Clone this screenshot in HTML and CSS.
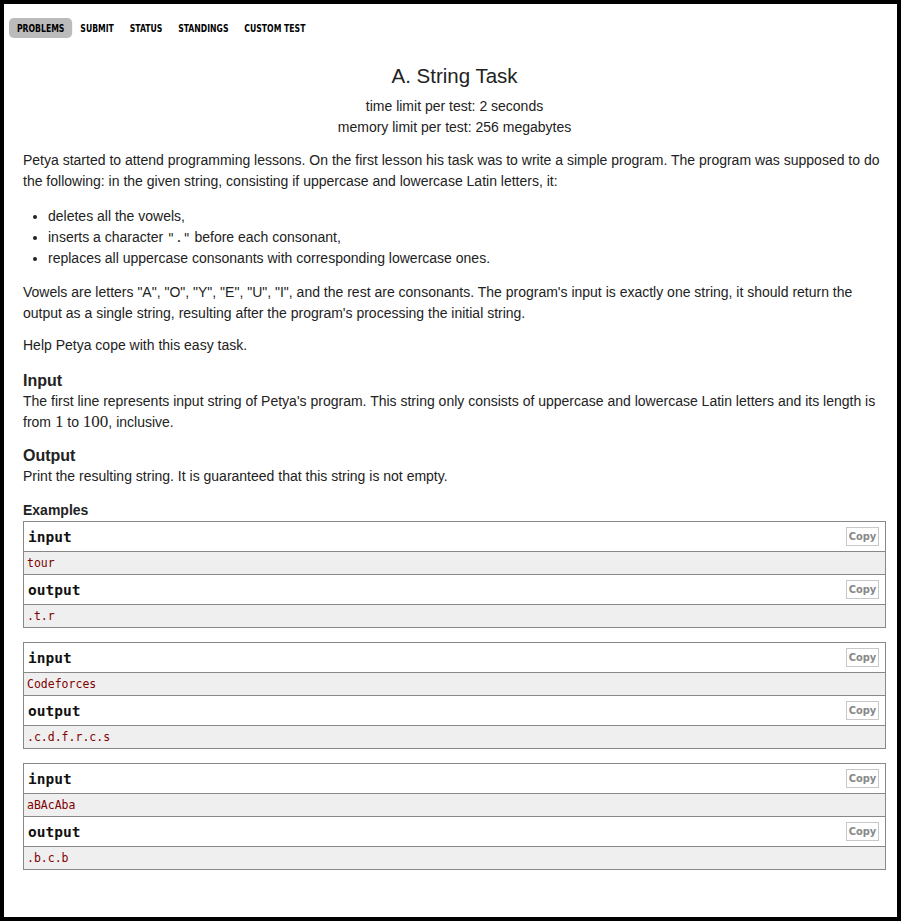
FILE: index.html
```html
<!DOCTYPE html>
<html>
<head>
<meta charset="utf-8">
<link rel="stylesheet" href="styles.css">
</head>
<body>
<nav class="menu">
  <a class="menu-item active">PROBLEMS</a>
  <a class="menu-item">SUBMIT</a>
  <a class="menu-item">STATUS</a>
  <a class="menu-item">STANDINGS</a>
  <a class="menu-item">CUSTOM TEST</a>
</nav>
<div class="problem">
  <div class="header">
    <div class="title">A. String Task</div>
    <div class="limit">time limit per test: 2 seconds</div>
    <div class="limit">memory limit per test: 256 megabytes</div>
  </div>
  <p>Petya started to attend programming lessons. On the first lesson his task was to write a simple program. The program was supposed to do the following: in the given string, consisting if uppercase and lowercase Latin letters, it:</p>
  <ul>
    <li>deletes all the vowels,</li>
    <li>inserts a character <code class="tt">"."</code> before each consonant,</li>
    <li>replaces all uppercase consonants with corresponding lowercase ones.</li>
  </ul>
  <p class="tight">Vowels are letters "A", "O", "Y", "E", "U", "I", and the rest are consonants. The program's input is exactly one string, it should return the output as a single string, resulting after the program's processing the initial string.</p>
  <p class="last">Help Petya cope with this easy task.</p>
  <h3 class="section-title first">Input</h3>
  <p class="section-text">The first line represents input string of Petya's program. This string only consists of uppercase and lowercase Latin letters and its length is from <span class="math">1</span> to <span class="math">100</span>, inclusive.</p>
  <h3 class="section-title">Output</h3>
  <p class="section-text">Print the resulting string. It is guaranteed that this string is not empty.</p>
  <div class="examples-title">Examples</div>
  <div class="sample">
    <div class="io">
      <div class="io-title">input<span class="copy">Copy</span></div>
      <pre class="io-data">tour</pre>
    </div>
    <div class="io">
      <div class="io-title">output<span class="copy">Copy</span></div>
      <pre class="io-data">.t.r</pre>
    </div>
  </div>
  <div class="sample">
    <div class="io">
      <div class="io-title">input<span class="copy">Copy</span></div>
      <pre class="io-data">Codeforces</pre>
    </div>
    <div class="io">
      <div class="io-title">output<span class="copy">Copy</span></div>
      <pre class="io-data">.c.d.f.r.c.s</pre>
    </div>
  </div>
  <div class="sample">
    <div class="io">
      <div class="io-title">input<span class="copy">Copy</span></div>
      <pre class="io-data">aBAcAba</pre>
    </div>
    <div class="io">
      <div class="io-title">output<span class="copy">Copy</span></div>
      <pre class="io-data">.b.c.b</pre>
    </div>
  </div>
</div>
</body>
</html>
```
FILE: styles.css
```css
html, body {
  margin: 0;
  padding: 0;
}
body {
  box-sizing: border-box;
  min-height: 100vh;
  border: 4px solid #000;
  background: #fff;
  color: #222;
  font-family: "Liberation Sans", Arial, sans-serif;
  font-size: 14px;
}
.menu {
  display: flex;
  padding: 14px 0 0 5px;
  transform: scaleX(0.78);
  transform-origin: 5px 0;
}
.menu-item {
  display: block;
  height: 20px;
  line-height: 21px;
  padding: 0 10.2px;
  font-family: "DejaVu Sans Condensed", "Liberation Sans", sans-serif;
  font-weight: bold;
  font-size: 11px;
  color: #000;
  border-radius: 6px / 5px;
}
.menu-item.active {
  background: #bbb;
}
.problem {
  margin: 0 11px 0 19px;
}
.header {
  text-align: center;
  margin-top: 24px;
}
.title {
  font-size: 20.5px;
  line-height: 28px;
  margin-bottom: 5.5px;
}
.limit {
  line-height: 21px;
}
p {
  margin: 12px 0 13px;
  line-height: 21px;
}
p.tight {
  margin: 13px 0 11px;
}
p.last {
  margin: 11px 0 0;
}
ul {
  margin: 14px 0 13px;
  padding-left: 25px;
  line-height: 21px;
}
.tt {
  font-family: "DejaVu Sans Mono", monospace;
  font-size: 13px;
}
.section-title {
  font-size: 16px;
  font-weight: bold;
  line-height: 20px;
  margin: 12.5px 0 0;
}
.section-title.first {
  margin-top: 15.5px;
}
.section-text {
  margin: 0;
}
.math {
  font-family: "Liberation Serif", "DejaVu Serif", serif;
  font-size: 17px;
  line-height: 1;
}
.examples-title {
  font-weight: bold;
  line-height: 18px;
  margin-top: 14.5px;
  margin-bottom: 2px;
}
.sample {
  border: 1px solid #888;
  margin-bottom: 14px;
}
.io-title {
  display: flex;
  justify-content: space-between;
  align-items: center;
  height: 29px;
  border-bottom: 1px solid #888;
  padding: 0 6px 0 4px;
  font-family: "DejaVu Sans Mono", monospace;
  font-weight: bold;
  font-size: 14.5px;
  color: #111;
}
.copy {
  display: block;
  box-sizing: border-box;
  width: 33px;
  height: 19px;
  line-height: 17px;
  border: 1px solid #c8c8c8;
  text-align: center;
  font-family: "DejaVu Sans Condensed", "Liberation Sans", sans-serif;
  font-size: 11px;
  font-weight: bold;
  color: #888;
  margin-top: -1px;
}
.io-data {
  margin: 0;
  height: 22px;
  line-height: 22px;
  padding: 0 3px;
  background: #efefef;
  font-family: "DejaVu Sans Mono", monospace;
  font-size: 11.5px;
  color: #800000;
}
.io:first-child .io-data {
  border-bottom: 1px solid #888;
}
```
